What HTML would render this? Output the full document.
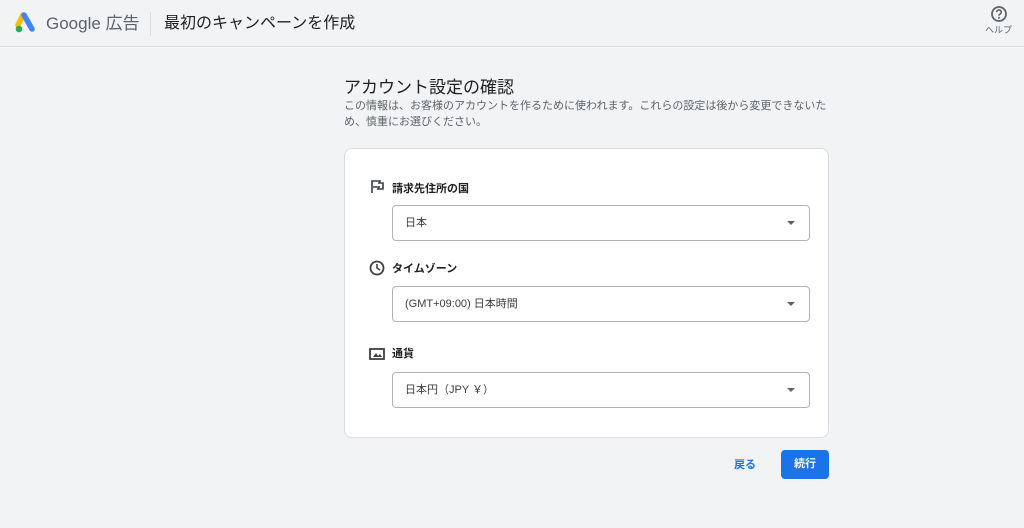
<!DOCTYPE html>
<html><head><meta charset="utf-8"><style>
*{margin:0;padding:0;box-sizing:border-box}
body{width:1024px;height:528px;background:#f1f3f4;font-family:"Liberation Sans","Noto Sans CJK JP",sans-serif;color:#3c4043;position:relative;overflow:hidden}
.hdr{position:absolute;left:0;top:0;width:1024px;height:47px;border-bottom:1px solid #e0e0e0}
.abs{position:absolute}
.card{position:absolute;left:344px;top:148px;width:485px;height:290px;background:#fff;border:1px solid #dadce0;border-radius:8px}
.lbl{position:absolute;font-size:11px;line-height:14px;color:#202124;font-weight:bold}
.sel{position:absolute;left:47px;width:418px;height:36px;border:1px solid #b0b3b8;border-radius:4px;font-size:11px;color:#3c4043;padding:0 12px;line-height:34px}
.sel:after{content:"";position:absolute;right:14px;top:15px;border-left:4px solid transparent;border-right:4px solid transparent;border-top:4px solid #5f6368}
</style></head><body>
<div class="hdr">
<svg class="abs" style="left:14px;top:12px" width="24" height="22" viewBox="0 0 24 22"><path d="M9 3 L4 13" stroke="#fbbc04" stroke-width="5.5" stroke-linecap="round"/><path d="M10 3 L18 17" stroke="#4285f4" stroke-width="5.5" stroke-linecap="round"/><circle cx="5" cy="17" r="3.3" fill="#34a853"/></svg>
<div class="abs" style="left:46px;top:13px;font-size:17px;line-height:22px;color:#5f6368">Google 広告</div>
<div class="abs" style="left:150px;top:12px;width:1px;height:24px;background:#dadce0"></div>
<div class="abs" style="left:164px;top:13px;font-size:16px;line-height:22px;color:#202124">最初のキャンペーンを作成</div>
<svg class="abs" style="left:990px;top:5px" width="18" height="18" viewBox="0 0 18 18"><circle cx="9" cy="9" r="7" fill="none" stroke="#5f6368" stroke-width="1.8"/><path d="M6.8 7.2a2.2 2.2 0 1 1 3 2c-.7.3-.8.7-.8 1.5" fill="none" stroke="#5f6368" stroke-width="1.6"/><circle cx="9" cy="12.7" r="1" fill="#5f6368"/></svg>
<div class="abs" style="left:985px;top:24px;font-size:9px;line-height:12px;color:#5f6368">ヘルプ</div>
</div>
<div class="abs" style="left:344px;top:77px;font-size:17px;line-height:22px;color:#202124">アカウント設定の確認</div>
<div class="abs" style="left:344px;top:98px;width:484px;font-size:11px;line-height:16px;color:#5f6368">この情報は、お客様のアカウントを作るために使われます。これらの設定は後から変更できないため、慎重にお選びください。</div>
<div class="card">
<svg class="abs" style="left:25px;top:31px" width="14" height="14" viewBox="0 0 14 14"><path d="M2 13V1h8l-1 2h4v6H8l1-2H3" fill="none" stroke="#3c4043" stroke-width="1.6"/></svg>
<div class="lbl" style="left:47px;top:33px">請求先住所の国</div>
<div class="sel" style="top:56px">日本</div>
<svg class="abs" style="left:24px;top:111px" width="16" height="16" viewBox="0 0 16 16"><circle cx="8" cy="8" r="6.5" fill="none" stroke="#3c4043" stroke-width="1.8"/><path d="M8 4v4l3 2" fill="none" stroke="#3c4043" stroke-width="1.6"/></svg>
<div class="lbl" style="left:47px;top:113px">タイムゾーン</div>
<div class="sel" style="top:137px">(GMT+09:00) 日本時間</div>
<svg class="abs" style="left:24px;top:199px" width="16" height="12" viewBox="0 0 16 12"><rect x="1" y="1" width="14" height="10" fill="none" stroke="#3c4043" stroke-width="1.8"/><path d="M4 9l3-4 2 3 2-2 2 3z" fill="#3c4043"/></svg>
<div class="lbl" style="left:47px;top:198px">通貨</div>
<div class="sel" style="top:223px">日本円（JPY ￥）</div>
</div>
<div class="abs" style="left:734px;top:458px;font-size:11px;line-height:14px;color:#1a73e8;font-weight:bold">戻る</div>
<div class="abs" style="left:781px;top:450px;width:48px;height:29px;background:#1a73e8;border-radius:4px;color:#fff;font-size:11px;font-weight:bold;text-align:center;line-height:29px">続行</div>
</body></html>
